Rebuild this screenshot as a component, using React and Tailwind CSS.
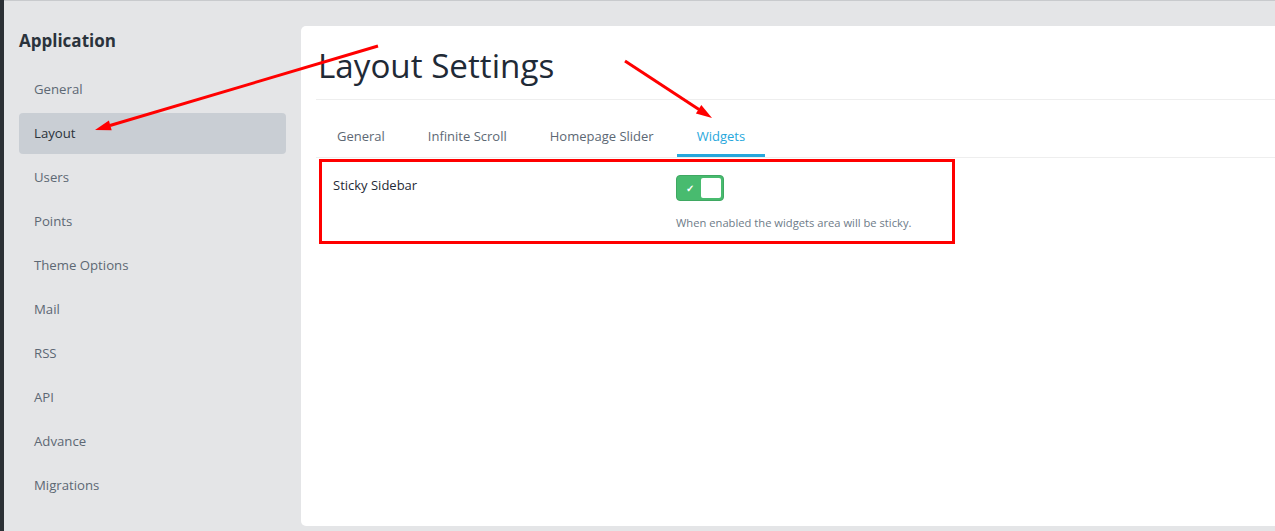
import React from "react";

const items = ["General", "Layout", "Users", "Points", "Theme Options", "Mail", "RSS", "API", "Advance", "Migrations"];

export default function App() {
  return (
    <div className="relative flex h-[531px] w-full overflow-hidden bg-[#e4e5e7]" style={{ fontFamily: '"Open Sans", "Noto Sans", sans-serif' }}>
      <div className="w-[4px] shrink-0 bg-[#2b3035]" />
      <div className="flex flex-1 border-t border-[#c8cacd]">
        <aside className="w-[297px] shrink-0 px-[15px] pt-[28px]">
          <h2 className="text-[17px] font-bold leading-[24px] text-[#2a333c]">Application</h2>
          <nav className="mt-[16px] flex flex-col gap-[3px]">
            {items.map((it) => (
              <div
                key={it}
                className={`h-[41px] rounded-[4px] pl-[15px] text-[13.2px] leading-[41px] ${it === "Layout" ? "bg-[#c9ced4] text-[#2b333b]" : "text-[#5d6874]"}`}
              >
                {it}
              </div>
            ))}
          </nav>
        </aside>
        <main className="mt-[25px] mb-[5px] flex-1 rounded-l-[5px] bg-white pl-[15px]">
          <h1 className="pt-[20px] pl-[2px] text-[33.2px] leading-[40px] text-[#1f2a36]">Layout Settings</h1>
          <div className="mt-[13px] border-t border-[#eeeeee]" />
          <div className="mt-[25px] flex gap-[3px] border-b border-[#eeeeee] pl-[1px]">
            {["General", "Infinite Scroll", "Homepage Slider", "Widgets"].map((t) => (
              <div
                key={t}
                className={`px-[20px] pb-[7px] text-[13px] leading-[22px] ${t === "Widgets" ? "border-b-[3px] border-[#27a7dc] text-[#27a7dc]" : "border-b-[3px] border-transparent text-[#5d6874]"}`}
              >
                {t}
              </div>
            ))}
          </div>
          <div className="ml-[3px] mt-[1px] flex h-[85px] w-[636px] border-[3px] border-[#ff0000] pl-[11px] pt-[13px]">
            <div className="w-[343px] text-[13px] leading-[20px] text-[#1f2a36]">Sticky Sidebar</div>
            <div className="flex flex-col">
              <div className="flex h-[26px] w-[48px] items-center rounded-[4px] border border-[#3fa862] bg-[#48bb6f] pl-[9px] pr-[2px]">
                <span className="text-[10px] font-bold leading-none text-white">✓</span>
                <div className="ml-auto h-[20px] w-[20px] rounded-[2px] bg-white" />
              </div>
              <div className="mt-[14px] text-[11.2px] leading-[16px] text-[#6e7b88]">When enabled the widgets area will be sticky.</div>
            </div>
          </div>
        </main>
      </div>
      <svg className="pointer-events-none absolute left-0 top-0" width="1275" height="531">
        <line x1="378" y1="46" x2="110" y2="125.5" stroke="#ff0000" strokeWidth="3" />
        <polygon points="95,130 111.7,130.2 108.9,120.6" fill="#ff0000" />
        <line x1="625" y1="61" x2="699" y2="109.5" stroke="#ff0000" strokeWidth="3" />
        <polygon points="712,118 695.9,113.4 701.3,105" fill="#ff0000" />
      </svg>
    </div>
  );
}
